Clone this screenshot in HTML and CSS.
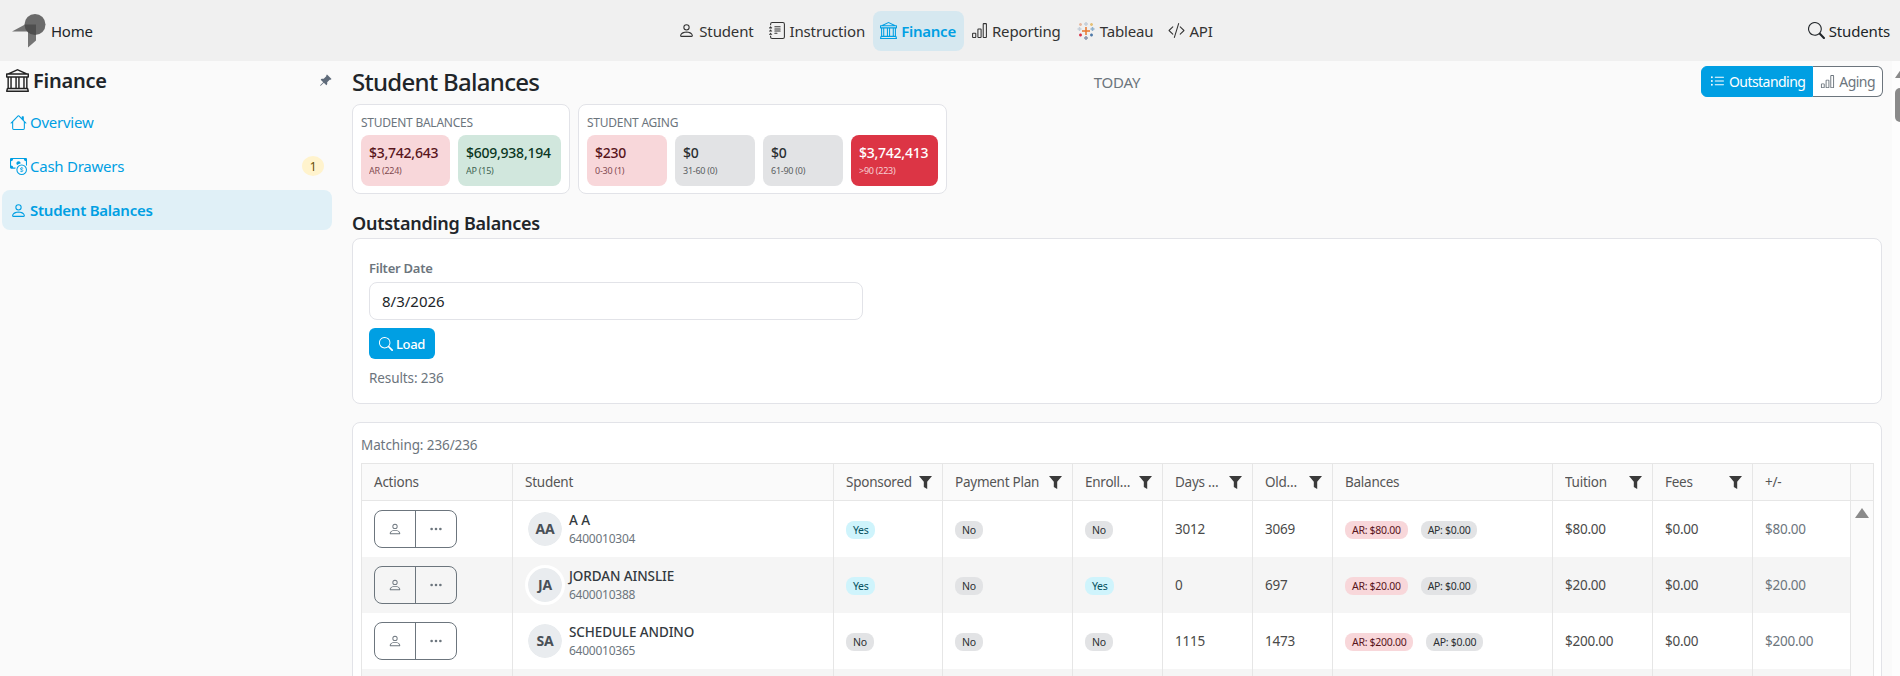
FILE: index.html
```html
<!DOCTYPE html>
<html lang="en">
<head>
    <meta charset="UTF-8">
    <title>Student Balances</title>
    <link rel="stylesheet" href="styles.css">
</head>
<body>
    <header class="topbar">
        <a class="home-link">
            <svg class="logo" viewBox="0 0 34 37.500"><path d="M0 17.500 13 10.500H24V26.500L16 33.500V17.500Z" fill="#444" opacity=".72"/><circle cx="23" cy="10.500" r="10.500" fill="#444" opacity=".78"/></svg>
            <span>Home</span>
        </a>
        <nav class="topnav">
            <a class="topnav-item"><svg class="icon" viewBox="0 0 16 16"><path d="M8 8a3 3 0 1 0 0-6 3 3 0 0 0 0 6m2-3a2 2 0 1 1-4 0 2 2 0 0 1 4 0m4 8c0 1-1 1-1 1H3s-1 0-1-1 1-4 6-4 6 3 6 4m-1-.004c-.001-.246-.154-.986-.832-1.664C11.516 10.68 10.289 10 8 10s-3.516.68-4.168 1.332c-.678.678-.83 1.418-.832 1.664z"/></svg>Student</a>
            <a class="topnav-item"><svg class="icon" viewBox="0 0 16 16"><path d="M5 10.500a.5.5 0 0 1 .5-.5h2a.5.5 0 0 1 0 1h-2a.5.5 0 0 1-.5-.5m0-2a.5.5 0 0 1 .5-.5h5a.5.5 0 0 1 0 1h-5a.5.5 0 0 1-.5-.5m0-2a.5.5 0 0 1 .5-.5h5a.5.5 0 0 1 0 1h-5a.5.5 0 0 1-.5-.5m0-2a.5.5 0 0 1 .5-.5h5a.5.5 0 0 1 0 1h-5a.5.5 0 0 1-.5-.5"/><path d="M3 0h10a2 2 0 0 1 2 2v12a2 2 0 0 1-2 2H3a2 2 0 0 1-2-2v-1h1v1a1 1 0 0 0 1 1h10a1 1 0 0 0 1-1V2a1 1 0 0 0-1-1H3a1 1 0 0 0-1 1v1H1V2a2 2 0 0 1 2-2"/><path d="M1 5v-.5a.5.5 0 0 1 1 0V5h.5a.5.5 0 0 1 0 1h-2a.5.5 0 0 1 0-1zm0 3v-.5a.5.5 0 0 1 1 0V8h.5a.5.5 0 0 1 0 1h-2a.5.5 0 0 1 0-1zm0 3v-.5a.5.5 0 0 1 1 0v.5h.5a.5.5 0 0 1 0 1h-2a.5.5 0 0 1 0-1z"/></svg>Instruction</a>
            <a class="topnav-item active"><svg class="icon" viewBox="0 0 16 16"><path d="m8 0 6.610 3h.89a.5.5 0 0 1 .5.5v2a.5.5 0 0 1-.5.5H15v7a.5.5 0 0 1 .485.38l.5 2a.498.498 0 0 1-.485.62H.5a.498.498 0 0 1-.485-.62l.5-2A.5.5 0 0 1 1 13V6H.5a.5.5 0 0 1-.5-.5v-2A.5.5 0 0 1 .5 3h.89zM3.777 3h8.447L8 1zM2 6v7h1V6zm2 0v7h2.500V6zm3.500 0v7h1V6zm2 0v7H12V6zM13 6v7h1V6zm2-1V4H1v1zm-.39 9H1.390l-.25 1h13.720z"/></svg>Finance</a>
            <a class="topnav-item"><svg class="icon" viewBox="0 0 16 16"><path d="M4 11H2v3h2zm5-4H7v7h2zm5-5v12h-2V2zm-2-1a1 1 0 0 0-1 1v12a1 1 0 0 0 1 1h2a1 1 0 0 0 1-1V2a1 1 0 0 0-1-1zM6 7a1 1 0 0 1 1-1h2a1 1 0 0 1 1 1v7a1 1 0 0 1-1 1H7a1 1 0 0 1-1-1zm-5 4a1 1 0 0 1 1-1h2a1 1 0 0 1 1 1v3a1 1 0 0 1-1 1H2a1 1 0 0 1-1-1z"/></svg>Reporting</a>
            <a class="topnav-item"><svg class="icon icon-tableau" viewBox="0 0 20 20" fill="none" stroke-width="1.500"><path d="M10 6v8M6 10h8" stroke="#e8762d"/><path d="M10 1v4M8 3h4" stroke="#c4cdd8"/><path d="M10 15v4M8 17h4" stroke="#8a94ad"/><path d="M3.500 6v4M1.500 8h4" stroke="#c4cdd8"/><path d="M16.500 6v4M14.500 8h4" stroke="#8fb1cc"/><path d="M4.500 2v3M3 3.500h3" stroke="#e8b9a0"/><path d="M15.500 2v3M14 3.500h3" stroke="#e6c27a"/><path d="M4.500 12.500v3M3 14h3" stroke="#d8344a"/><path d="M15.500 12.500v3M14 14h3" stroke="#4e79a7"/></svg>Tableau</a>
            <a class="topnav-item"><svg class="icon" viewBox="0 0 16 16"><path d="M10.478 1.647a.5.5 0 1 0-.956-.294l-4 13a.5.5 0 0 0 .956.294zM4.854 4.146a.5.5 0 0 1 0 .708L1.707 8l3.147 3.146a.5.5 0 0 1-.708.708l-3.500-3.500a.5.5 0 0 1 0-.708l3.500-3.500a.5.5 0 0 1 .708 0m6.292 0a.5.5 0 0 0 0 .708L14.293 8l-3.147 3.146a.5.5 0 0 0 .708.708l3.500-3.500a.5.5 0 0 0 0-.708l-3.500-3.500a.5.5 0 0 0-.708 0"/></svg>API</a>
        </nav>
        <a class="search-link"><svg class="icon" viewBox="0 0 16 16"><path d="M11.742 10.344a6.500 6.500 0 1 0-1.397 1.398h-.001q.044.060.098.115l3.850 3.850a1 1 0 0 0 1.415-1.414l-3.850-3.850a1 1 0 0 0-.115-.1zM12 6.500a5.500 5.500 0 1 1-11 0 5.500 5.500 0 0 1 11 0"/></svg>Students</a>
    </header>

    <div class="layout">
        <aside class="sidebar">
            <div class="sidebar-head">
                <svg class="icon-bank" viewBox="0 0 16 16"><path d="m8 0 6.610 3h.89a.5.5 0 0 1 .5.5v2a.5.5 0 0 1-.5.5H15v7a.5.5 0 0 1 .485.38l.5 2a.498.498 0 0 1-.485.62H.5a.498.498 0 0 1-.485-.62l.5-2A.5.5 0 0 1 1 13V6H.5a.5.5 0 0 1-.5-.5v-2A.5.5 0 0 1 .5 3h.89zM3.777 3h8.447L8 1zM2 6v7h1V6zm2 0v7h2.500V6zm3.500 0v7h1V6zm2 0v7H12V6zM13 6v7h1V6zm2-1V4H1v1zm-.39 9H1.390l-.25 1h13.720z"/></svg>
                <span class="sidebar-title">Finance</span>
                <svg class="icon-pin" viewBox="0 0 16 16"><path d="M9.828.722a.5.5 0 0 1 .354.146l4.950 4.950a.5.5 0 0 1 0 .707c-.48.48-1.072.588-1.503.588-.177 0-.335-.018-.46-.039l-3.134 3.134a6 6 0 0 1 .16 1.013c.046.702-.032 1.687-.72 2.375a.5.5 0 0 1-.707 0l-2.829-2.828-3.182 3.182c-.195.195-1.219.902-1.414.707s.512-1.220.707-1.414l3.182-3.182-2.828-2.829a.5.5 0 0 1 0-.707c.688-.688 1.673-.767 2.375-.72a6 6 0 0 1 1.013.16l3.134-3.133a3 3 0 0 1-.04-.461c0-.43.108-1.022.589-1.503a.5.5 0 0 1 .353-.146"/></svg>
            </div>
            <a class="side-item"><svg class="icon" viewBox="0 0 16 16"><path d="M8.707 1.500a1 1 0 0 0-1.414 0L.646 8.146a.5.5 0 0 0 .708.708L2 8.207V13.500A1.500 1.500 0 0 0 3.500 15h9a1.500 1.500 0 0 0 1.500-1.500V8.207l.646.647a.5.5 0 0 0 .708-.708L13 5.793V2.500a.5.5 0 0 0-.5-.5h-1a.5.5 0 0 0-.5.5v1.293zM13 7.207V13.500a.5.5 0 0 1-.5.5h-9a.5.5 0 0 1-.5-.5V7.207l5-5z"/></svg>Overview</a>
            <a class="side-item"><svg class="icon" viewBox="0 0 16 16"><path d="M11 15a4 4 0 1 0 0-8 4 4 0 0 0 0 8m5-4a5 5 0 1 1-10 0 5 5 0 0 1 10 0"/><path d="M9.438 11.944c.047.596.518 1.060 1.363 1.116v.44h.375v-.443c.875-.061 1.386-.529 1.386-1.207 0-.618-.39-.936-1.090-1.100l-.296-.07v-1.200c.376.043.614.248.671.532h.658c-.047-.575-.54-1.024-1.329-1.073V8.500h-.375v.45c-.747.073-1.255.522-1.255 1.158 0 .562.378.92 1.007 1.066l.248.061v1.272c-.384-.058-.639-.27-.696-.563h-.668zm1.360-1.354c-.369-.085-.569-.26-.569-.522 0-.294.216-.514.572-.578v1.100zm.432.746c.449.104.655.272.655.569 0 .339-.257.571-.709.614v-1.195z"/><path d="M1 0a1 1 0 0 0-1 1v8a1 1 0 0 0 1 1h4.083q.088-.517.258-1H3a2 2 0 0 0-2-2V3a2 2 0 0 0 2-2h10a2 2 0 0 0 2 2v3.528c.38.34.717.728 1 1.154V1a1 1 0 0 0-1-1z"/><path d="M9.998 5.083 10 5a2 2 0 1 0-3.132 1.650 6 6 0 0 1 3.130-1.567"/></svg>Cash Drawers<span class="side-badge">1</span></a>
            <a class="side-item active"><svg class="icon" viewBox="0 0 16 16"><path d="M8 8a3 3 0 1 0 0-6 3 3 0 0 0 0 6m2-3a2 2 0 1 1-4 0 2 2 0 0 1 4 0m4 8c0 1-1 1-1 1H3s-1 0-1-1 1-4 6-4 6 3 6 4m-1-.004c-.001-.246-.154-.986-.832-1.664C11.516 10.680 10.289 10 8 10s-3.516.68-4.168 1.332c-.678.678-.83 1.418-.832 1.664z"/></svg>Student Balances</a>
        </aside>

        <main class="content">
            <div class="page-head">
                <h1 class="page-title">Student Balances</h1>
                <div class="today">TODAY</div>
                <div class="view-toggle">
                    <a class="toggle-btn selected"><svg class="icon" viewBox="0 0 16 16"><path d="M5 11.500a.5.5 0 0 1 .5-.5h9a.5.5 0 0 1 0 1h-9a.5.5 0 0 1-.5-.5m0-4a.5.5 0 0 1 .5-.5h9a.5.5 0 0 1 0 1h-9a.5.5 0 0 1-.5-.5m0-4a.5.5 0 0 1 .5-.5h9a.5.5 0 0 1 0 1h-9a.5.5 0 0 1-.5-.5m-3 1a1 1 0 1 0 0-2 1 1 0 0 0 0 2m0 4a1 1 0 1 0 0-2 1 1 0 0 0 0 2m0 4a1 1 0 1 0 0-2 1 1 0 0 0 0 2"/></svg>Outstanding</a>
                    <a class="toggle-btn"><svg class="icon" viewBox="0 0 16 16"><path d="M4 11H2v3h2zm5-4H7v7h2zm5-5v12h-2V2zm-2-1a1 1 0 0 0-1 1v12a1 1 0 0 0 1 1h2a1 1 0 0 0 1-1V2a1 1 0 0 0-1-1zM6 7a1 1 0 0 1 1-1h2a1 1 0 0 1 1 1v7a1 1 0 0 1-1 1H7a1 1 0 0 1-1-1zm-5 4a1 1 0 0 1 1-1h2a1 1 0 0 1 1 1v3a1 1 0 0 1-1 1H2a1 1 0 0 1-1-1z"/></svg>Aging</a>
                </div>
            </div>

            <div class="stat-row">
                <section class="stat-card">
                    <div class="stat-title">STUDENT BALANCES</div>
                    <div class="stat-tiles">
                        <div class="tile tile-red tile-w1"><div class="tile-value">$3,742,643</div><div class="tile-label">AR (224)</div></div>
                        <div class="tile tile-green tile-w2"><div class="tile-value">$609,938,194</div><div class="tile-label">AP (15)</div></div>
                    </div>
                </section>
                <section class="stat-card">
                    <div class="stat-title">STUDENT AGING</div>
                    <div class="stat-tiles">
                        <div class="tile tile-red tile-w3"><div class="tile-value">$230</div><div class="tile-label">0-30 (1)</div></div>
                        <div class="tile tile-grey tile-w3"><div class="tile-value">$0</div><div class="tile-label">31-60 (0)</div></div>
                        <div class="tile tile-grey tile-w3"><div class="tile-value">$0</div><div class="tile-label">61-90 (0)</div></div>
                        <div class="tile tile-danger tile-w4"><div class="tile-value">$3,742,413</div><div class="tile-label">&gt;90 (223)</div></div>
                    </div>
                </section>
            </div>

            <h2 class="section-title">Outstanding Balances</h2>

            <section class="card filter-card">
                <label class="filter-label" for="filterDate">Filter Date</label>
                <input class="filter-input" id="filterDate" type="text" value="8/3/2026">
                <button class="load-btn" type="button"><svg class="icon" viewBox="0 0 16 16"><path d="M11.742 10.344a6.500 6.500 0 1 0-1.397 1.398h-.001q.044.060.098.115l3.850 3.850a1 1 0 0 0 1.415-1.414l-3.850-3.850a1 1 0 0 0-.115-.1zM12 6.500a5.500 5.500 0 1 1-11 0 5.500 5.500 0 0 1 11 0"/></svg>Load</button>
                <div class="muted-line">Results: 236</div>
            </section>

            <section class="card table-card">
                <div class="muted-line">Matching: 236/236</div>
                <table class="grid">
                    <colgroup>
                        <col class="c-actions"><col class="c-student"><col class="c-sponsored"><col class="c-plan"><col class="c-enroll"><col class="c-days"><col class="c-old"><col class="c-balances"><col class="c-tuition"><col class="c-fees"><col class="c-diff"><col class="c-scroll">
                    </colgroup>
                    <thead>
                        <tr>
                            <th>Actions</th>
                            <th>Student</th>
                            <th><div class="th-filter"><span>Sponsored</span><svg class="funnel" viewBox="0 0 13 13"><path d="M0 0h13L8.200 5.700V13L4.800 11V5.700z"/></svg></div></th>
                            <th><div class="th-filter"><span>Payment Plan</span><svg class="funnel" viewBox="0 0 13 13"><path d="M0 0h13L8.200 5.700V13L4.800 11V5.700z"/></svg></div></th>
                            <th><div class="th-filter"><span>Enrollment</span><svg class="funnel" viewBox="0 0 13 13"><path d="M0 0h13L8.200 5.700V13L4.800 11V5.700z"/></svg></div></th>
                            <th><div class="th-filter"><span>Days Past</span><svg class="funnel" viewBox="0 0 13 13"><path d="M0 0h13L8.200 5.700V13L4.800 11V5.700z"/></svg></div></th>
                            <th><div class="th-filter"><span>Oldest</span><svg class="funnel" viewBox="0 0 13 13"><path d="M0 0h13L8.200 5.700V13L4.800 11V5.700z"/></svg></div></th>
                            <th>Balances</th>
                            <th><div class="th-filter"><span>Tuition</span><svg class="funnel" viewBox="0 0 13 13"><path d="M0 0h13L8.200 5.700V13L4.800 11V5.700z"/></svg></div></th>
                            <th><div class="th-filter"><span>Fees</span><svg class="funnel" viewBox="0 0 13 13"><path d="M0 0h13L8.200 5.700V13L4.800 11V5.700z"/></svg></div></th>
                            <th>+/-</th>
                            <th></th>
                        </tr>
                    </thead>
                    <tbody>
                        <tr>
                            <td><div class="btn-pair"><a><svg class="icon" viewBox="0 0 16 16"><path d="M8 8a3 3 0 1 0 0-6 3 3 0 0 0 0 6m2-3a2 2 0 1 1-4 0 2 2 0 0 1 4 0m4 8c0 1-1 1-1 1H3s-1 0-1-1 1-4 6-4 6 3 6 4m-1-.004c-.001-.246-.154-.986-.832-1.664C11.516 10.680 10.289 10 8 10s-3.516.68-4.168 1.332c-.678.678-.83 1.418-.832 1.664z"/></svg></a><a><svg class="icon" viewBox="0 0 16 16"><path d="M3 9.500a1.500 1.500 0 1 1 0-3 1.500 1.500 0 0 1 0 3m5 0a1.500 1.500 0 1 1 0-3 1.500 1.500 0 0 1 0 3m5 0a1.500 1.500 0 1 1 0-3 1.500 1.500 0 0 1 0 3"/></svg></a></div></td>
                            <td><div class="student"><span class="avatar">AA</span><div><div class="student-name">A A</div><div class="student-id">6400010304</div></div></div></td>
                            <td><span class="pill pill-yes">Yes</span></td>
                            <td><span class="pill pill-no">No</span></td>
                            <td><span class="pill pill-no">No</span></td>
                            <td>3012</td>
                            <td>3069</td>
                            <td><span class="pill pill-ar">AR: $80.00</span><span class="pill pill-no">AP: $0.00</span></td>
                            <td>$80.00</td>
                            <td>$0.00</td>
                            <td class="diff">$80.00</td>
                            <td class="scroll-cell"><span class="scroll-up"></span></td>
                        </tr>
                        <tr>
                            <td><div class="btn-pair"><a><svg class="icon" viewBox="0 0 16 16"><path d="M8 8a3 3 0 1 0 0-6 3 3 0 0 0 0 6m2-3a2 2 0 1 1-4 0 2 2 0 0 1 4 0m4 8c0 1-1 1-1 1H3s-1 0-1-1 1-4 6-4 6 3 6 4m-1-.004c-.001-.246-.154-.986-.832-1.664C11.516 10.680 10.289 10 8 10s-3.516.68-4.168 1.332c-.678.678-.83 1.418-.832 1.664z"/></svg></a><a><svg class="icon" viewBox="0 0 16 16"><path d="M3 9.500a1.500 1.500 0 1 1 0-3 1.500 1.500 0 0 1 0 3m5 0a1.500 1.500 0 1 1 0-3 1.500 1.500 0 0 1 0 3m5 0a1.500 1.500 0 1 1 0-3 1.500 1.500 0 0 1 0 3"/></svg></a></div></td>
                            <td><div class="student"><span class="avatar">JA</span><div><div class="student-name">JORDAN AINSLIE</div><div class="student-id">6400010388</div></div></div></td>
                            <td><span class="pill pill-yes">Yes</span></td>
                            <td><span class="pill pill-no">No</span></td>
                            <td><span class="pill pill-yes">Yes</span></td>
                            <td>0</td>
                            <td>697</td>
                            <td><span class="pill pill-ar">AR: $20.00</span><span class="pill pill-no">AP: $0.00</span></td>
                            <td>$20.00</td>
                            <td>$0.00</td>
                            <td class="diff">$20.00</td>
                            <td class="scroll-cell"></td>
                        </tr>
                        <tr>
                            <td><div class="btn-pair"><a><svg class="icon" viewBox="0 0 16 16"><path d="M8 8a3 3 0 1 0 0-6 3 3 0 0 0 0 6m2-3a2 2 0 1 1-4 0 2 2 0 0 1 4 0m4 8c0 1-1 1-1 1H3s-1 0-1-1 1-4 6-4 6 3 6 4m-1-.004c-.001-.246-.154-.986-.832-1.664C11.516 10.680 10.289 10 8 10s-3.516.68-4.168 1.332c-.678.678-.83 1.418-.832 1.664z"/></svg></a><a><svg class="icon" viewBox="0 0 16 16"><path d="M3 9.500a1.500 1.500 0 1 1 0-3 1.500 1.500 0 0 1 0 3m5 0a1.500 1.500 0 1 1 0-3 1.500 1.500 0 0 1 0 3m5 0a1.500 1.500 0 1 1 0-3 1.500 1.500 0 0 1 0 3"/></svg></a></div></td>
                            <td><div class="student"><span class="avatar">SA</span><div><div class="student-name">SCHEDULE ANDINO</div><div class="student-id">6400010365</div></div></div></td>
                            <td><span class="pill pill-no">No</span></td>
                            <td><span class="pill pill-no">No</span></td>
                            <td><span class="pill pill-no">No</span></td>
                            <td>1115</td>
                            <td>1473</td>
                            <td><span class="pill pill-ar">AR: $200.00</span><span class="pill pill-no">AP: $0.00</span></td>
                            <td>$200.00</td>
                            <td>$0.00</td>
                            <td class="diff">$200.00</td>
                            <td class="scroll-cell"></td>
                        </tr>
                        <tr>
                            <td></td><td></td><td></td><td></td><td></td><td></td><td></td><td></td><td></td><td></td><td></td><td class="scroll-cell"></td>
                        </tr>
                    </tbody>
                </table>
            </section>
        </main>
    </div>

    <div class="page-scroll"><span class="page-scroll-up"></span><span class="page-scroll-thumb"></span></div>
</body>
</html>
```

FILE: styles.css
```css
* {
    box-sizing: border-box;
}
html, body {
    height: 100%;
}
body {
    margin: 0;
    overflow: hidden;
    background: #fafafa;
    color: #212529;
    font-family: 'Noto Sans', 'Open Sans', Arial, sans-serif;
    font-size: 14px;
    letter-spacing: -0.25px;
}
.icon {
    width: 14px;
    height: 14px;
    fill: currentColor;
    flex: none;
}

/* top bar */
.topbar {
    height: 61px;
    padding: 0 10px 0 12px;
    background: #f0f0f0;
    display: grid;
    grid-template-columns: 1fr auto 1fr;
    align-items: center;
}
.home-link {
    display: flex;
    align-items: center;
    gap: 5px;
    font-size: 15px;
}
.logo {
    width: 34px;
    height: 37.5px;
    margin-top: 4px;
}
.topnav {
    display: flex;
    align-items: center;
    margin-right: 10px;
}
.topnav-item {
    height: 40px;
    padding: 0 8px 0 7px;
    display: flex;
    align-items: center;
    gap: 4px;
    border-radius: 8px;
    font-size: 15px;
    letter-spacing: -0.15px;
    color: #333;
}
.topnav-item .icon {
    width: 17px;
    height: 17px;
}
.topnav-item .icon-tableau {
    width: 20px;
    height: 20px;
}
.topnav-item.active {
    background: #d6e8f0;
    color: #009fe3;
    font-weight: 600;
    letter-spacing: -0.25px;
}
.search-link {
    justify-self: end;
    display: flex;
    align-items: center;
    gap: 4px;
    font-size: 15px;
    letter-spacing: -0.15px;
}
.search-link .icon {
    width: 17px;
    height: 17px;
}

/* sidebar */
.layout {
    display: flex;
    height: calc(100% - 61px);
}
.sidebar {
    width: 352px;
    flex: none;
    padding: 0 20px 0 2px;
    display: flex;
    flex-direction: column;
    gap: 4px;
}
.sidebar-head {
    height: 37px;
    padding: 2px 0 0 4px;
    display: flex;
    align-items: center;
    gap: 4px;
}
.icon-bank {
    width: 23px;
    height: 23px;
    fill: #222;
}
.sidebar-title {
    flex: 1;
    font-size: 20px;
    font-weight: 600;
}
.icon-pin {
    width: 13px;
    height: 13px;
    fill: #5f6b7a;
}
.side-item {
    height: 40px;
    padding: 0 8px;
    display: flex;
    align-items: center;
    gap: 3px;
    border-radius: 8px;
    color: #009fe3;
    font-size: 15px;
}
.side-item .icon {
    width: 17px;
    height: 17px;
}
.side-item.active {
    background: #e0f0f7;
    font-weight: 600;
}
.side-badge {
    width: 22px;
    height: 20px;
    margin-left: auto;
    border-radius: 50%;
    background: #fff3cd;
    color: #664d03;
    font-size: 12px;
    display: flex;
    align-items: center;
    justify-content: center;
}

/* main */
.content {
    flex: 1;
    min-width: 0;
    padding: 4px 18px 0 0;
}
.page-head {
    display: grid;
    grid-template-columns: 1fr auto 1fr;
    align-items: center;
    height: 31px;
    margin-bottom: 8px;
}
.page-title {
    margin: 0;
    font-size: 24px;
    font-weight: 500;
    letter-spacing: -0.7px;
}
.today {
    color: #6c757d;
    font-size: 15px;
}
.view-toggle {
    justify-self: end;
    display: flex;
    height: 31px;
    margin-right: -1px;
    font-size: 14px;
    letter-spacing: -0.55px;
}
.toggle-btn {
    display: flex;
    align-items: center;
    gap: 4px;
    padding: 0 7px;
    color: #6c757d;
    background: #fff;
    border: 1px solid #6c757d;
    border-left: none;
    border-radius: 0 6px 6px 0;
}
.toggle-btn .icon {
    width: 15px;
    height: 15px;
}
.toggle-btn.selected {
    padding: 0 7px 0 8px;
    background: #009fe3;
    border: 1px solid #009fe3;
    border-radius: 6px 0 0 6px;
    color: #fff;
}
.stat-row {
    display: flex;
    gap: 8px;
}
.stat-card {
    height: 90px;
    padding: 8px 8px 0;
    background: #fff;
    border: 1px solid #e2e3e8;
    border-radius: 8px;
}
.stat-title {
    height: 22px;
    font-size: 12px;
    line-height: 20px;
    color: #6c757d;
}
.stat-tiles {
    display: flex;
    gap: 8px;
}
.tile {
    height: 51px;
    padding: 8px 8px 0;
    border-radius: 8px;
}
.tile-w1 { width: 89px; }
.tile-w2 { width: 103px; }
.tile-w3 { width: 80px; }
.tile-w4 { width: 87px; }
.tile-value {
    font-size: 14px;
    font-weight: 500;
    line-height: 20px;
    white-space: nowrap;
}
.tile-label {
    margin-top: 1px;
    font-size: 9px;
    line-height: 14px;
    opacity: .75;
}
.tile-red { background: #f8d7da; color: #58151c; }
.tile-green { background: #d1e7dd; color: #0a3622; }
.tile-grey { background: #e2e3e5; color: #2b2f32; }
.tile-danger { background: #dc3545; color: #fff; }
.section-title {
    margin: 17px 0 3px;
    height: 24px;
    font-size: 18px;
    line-height: 24px;
    font-weight: 600;
}
.card {
    background: #fff;
    border: 1px solid #e2e3e8;
    border-radius: 8px;
}
.filter-card {
    height: 166px;
    padding: 19px 16px 0;
}
.filter-label {
    display: block;
    height: 20px;
    margin-bottom: 4px;
    color: #6c757d;
    font-size: 13px;
    font-weight: 600;
    line-height: 20px;
}
.filter-input {
    display: block;
    width: 494px;
    height: 38px;
    padding: 0 12px;
    border: 1px solid #e2e3e8;
    border-radius: 8px;
    background: #fff;
    font: inherit;
    font-size: 15px;
    color: #212529;
    outline: none;
}
.load-btn {
    height: 31px;
    width: 66px;
    margin: 8px 0 9px;
    padding: 0;
    border: none;
    border-radius: 6px;
    background: #009fe3;
    color: #fff;
    font: inherit;
    font-size: 13px;
    font-weight: 500;
    letter-spacing: -0.3px;
    display: flex;
    align-items: center;
    justify-content: center;
    gap: 3px;
}
.muted-line {
    height: 20px;
    line-height: 20px;
    font-size: 13.5px;
    letter-spacing: -0.1px;
    color: #6c757d;
}

/* table */
.table-card {
    margin-top: 18px;
    padding: 12px 8px 0;
}
.table-card .muted-line {
    margin-bottom: 8px;
}
.grid {
    width: 1512px;
    border-collapse: collapse;
    table-layout: fixed;
}
.c-actions { width: 151px; }
.c-student { width: 321px; }
.c-sponsored { width: 109px; }
.c-plan { width: 130px; }
.c-enroll { width: 90px; }
.c-days { width: 90px; }
.c-old { width: 80px; }
.c-balances { width: 220px; }
.c-tuition { width: 100px; }
.c-fees { width: 100px; }
.c-diff { width: 98px; }
.c-scroll { width: 23px; }
.grid th, .grid td {
    border: 1px solid #e6e6e6;
    padding: 0 12px;
    font-size: 13.5px;
    white-space: nowrap;
}
.grid th {
    height: 37px;
    background: #fafafa;
    color: #555;
    font-weight: 400;
    text-align: left;
}
.grid td {
    height: 56px;
    border-top: none;
    border-bottom: none;
    color: #4a4a4a;
}
.grid th:nth-child(n+3):nth-child(-n+7),
.grid th:nth-child(9),
.grid th:nth-child(10) {
    padding-right: 10px;
}
.grid tbody tr:nth-child(even) td {
    background: #f5f5f5;
}
.grid tbody tr td.scroll-cell {
    background: #fbfbfb;
    padding: 0;
    vertical-align: top;
}
.scroll-up {
    display: block;
    width: 0;
    margin: 7px auto 0;
    border-left: 7px solid transparent;
    border-right: 7px solid transparent;
    border-bottom: 10px solid #8a8a8a;
}
.th-filter {
    display: flex;
    align-items: center;
    gap: 6px;
}
.th-filter span {
    flex: 1;
    min-width: 0;
    overflow: hidden;
    text-overflow: ellipsis;
}
.funnel {
    width: 13px;
    height: 13px;
    flex: none;
    fill: #3a3a3a;
}
.btn-pair {
    width: 83px;
    height: 38px;
    display: flex;
    border: 1px solid #6c757d;
    border-radius: 8px;
    color: #6c757d;
}
.btn-pair a {
    flex: 1;
    display: flex;
    align-items: center;
    justify-content: center;
}
.btn-pair a + a {
    border-left: 1px solid #6c757d;
}
.student {
    display: flex;
    align-items: center;
    gap: 4px;
}
.avatar {
    width: 40px;
    height: 40px;
    border: 3px solid #fff;
    border-radius: 50%;
    background: #e9ecef;
    background-clip: padding-box;
    color: #495057;
    font-weight: 700;
    font-size: 14px;
    display: flex;
    align-items: center;
    justify-content: center;
    flex: none;
}
.student-name {
    font-weight: 500;
    font-size: 13.5px;
    letter-spacing: -0.1px;
    line-height: 20px;
    color: #343a40;
}
.student-id {
    font-size: 12px;
    line-height: 17px;
    color: #6c757d;
}
.pill {
    display: inline-block;
    height: 18px;
    padding: 0 7px;
    border-radius: 8px;
    font-size: 10.5px;
    letter-spacing: -0.3px;
    line-height: 18px;
    vertical-align: middle;
    margin-top: 3px;
}
.pill + .pill {
    margin-left: 13px;
}
.pill-yes { background: #cff4fc; color: #055160; }
.pill-no { background: #e2e3e5; color: #2b2f32; }
.pill-ar { background: #f8d7da; color: #58151c; }
.grid td.diff {
    color: #6c757d;
}

/* page scrollbar, cut off at the window edge */
.page-scroll {
    position: absolute;
    top: 61px;
    right: 0;
    bottom: 0;
    width: 8px;
    background: #fdfdfd;
    overflow: hidden;
}
.page-scroll-up {
    position: absolute;
    top: 7px;
    left: 3px;
    width: 0;
    border-left: 7px solid transparent;
    border-right: 7px solid transparent;
    border-bottom: 10px solid #8a8a8a;
}
.page-scroll-thumb {
    position: absolute;
    top: 27px;
    left: 3px;
    width: 14px;
    height: 34px;
    border-radius: 5px;
    background: #8a8a8a;
}
```
